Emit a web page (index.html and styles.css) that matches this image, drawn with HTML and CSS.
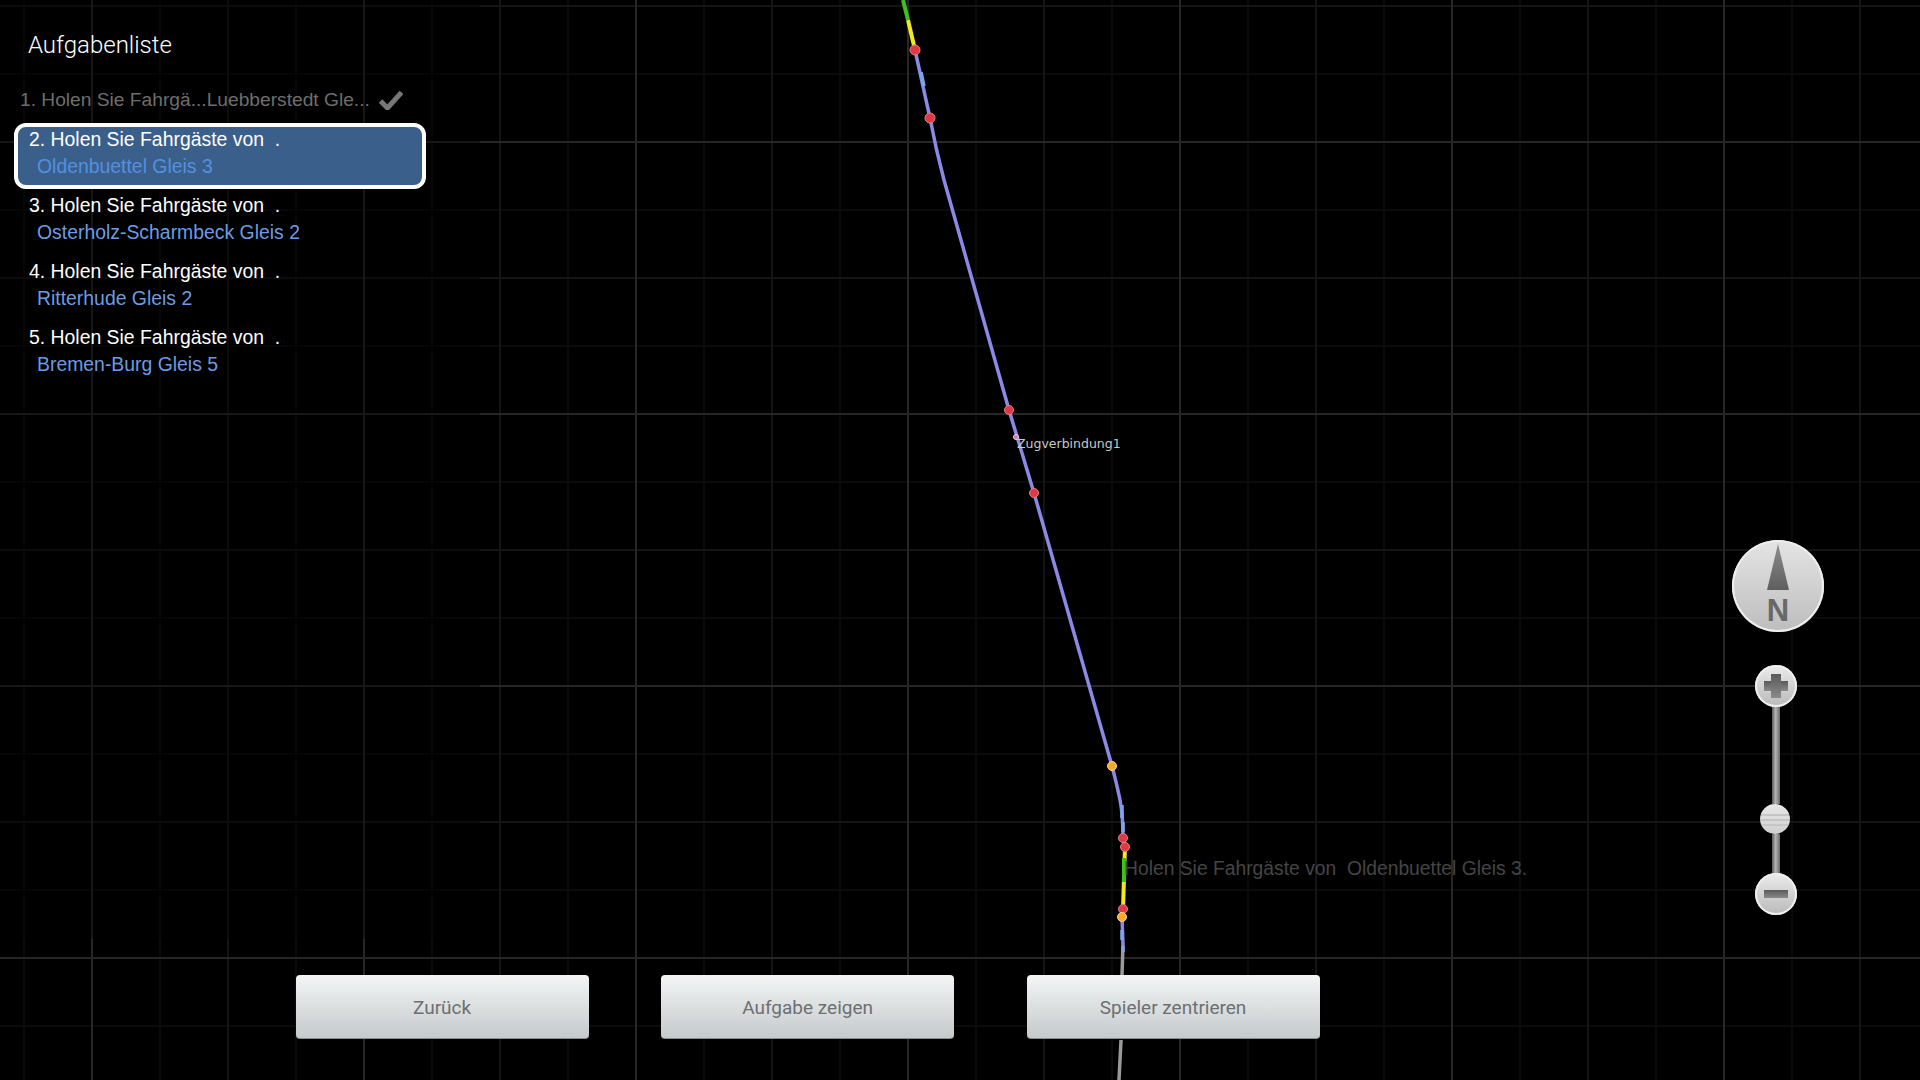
FILE: index.html
```html
<!DOCTYPE html>
<html lang="de">
<head>
  <meta charset="utf-8">
  <title>Aufgabenliste</title>
  <link rel="stylesheet" href="styles.css">
</head>
<body>
  <div class="screen">
    <div class="tile-dim"></div>

    <svg class="track" width="1920" height="1080" viewBox="0 0 1920 1080">
      <path class="rail grey" d="M1123 945 L1122 975 M1121 1040 Q1120 1060 1119 1080"/>
      <path class="rail blue" d="M915 50 L930 118 Q936 150 944 180 L1009 410 L1034 493 L1112 766 Q1117 785 1120 800 Q1123 815 1123 838 L1125 847"/>
      <path class="rail blue" d="M1122 917 L1123 945"/>
      <path class="rail yellow" d="M908 20 L915 50"/>
      <path class="rail green" d="M903 0 L908 20"/>
      <path class="rail yellow" d="M1125 847 L1123 909"/>
      <path class="rail green" d="M1124 858 L1124 882"/>
      <path class="stub" d="M1122 805 V818 M1123 822 V832 M921 72 L924 86 M1122 930 V940 M1123 946 V952"/>
      <circle class="dot red" cx="915" cy="50" r="5"/>
      <circle class="dot red" cx="930" cy="118" r="5"/>
      <circle class="dot red" cx="1009" cy="410" r="4.5"/>
      <circle class="dot pink" cx="1016" cy="437" r="2.5"/>
      <circle class="dot red" cx="1034" cy="493" r="4.5"/>
      <circle class="dot amber" cx="1112" cy="766" r="4.5"/>
      <circle class="dot red" cx="1123" cy="838" r="4.5"/>
      <circle class="dot red" cx="1125" cy="847" r="4.5"/>
      <circle class="dot red" cx="1123" cy="909" r="4.5"/>
      <circle class="dot amber" cx="1122" cy="917" r="4.5"/>
    </svg>

    <span class="train-label">Zugverbindung1</span>
    <span class="task-hint">Holen Sie Fahrgäste von&nbsp; Oldenbuettel Gleis 3.</span>

    <aside class="task-panel">
      <h1 class="task-title">Aufgabenliste</h1>
      <div class="task-done">
        <span>1. Holen Sie Fahrgä...Luebberstedt Gle...</span>
        <svg class="check" width="24" height="20" viewBox="0 0 24 20">
          <path d="M1.5 11 L8.5 18 L22.5 2.5" />
        </svg>
      </div>
      <div class="task active">
        <div class="task-line">2. Holen Sie Fahrgäste von&nbsp; .</div>
        <div class="task-place">Oldenbuettel Gleis 3</div>
      </div>
      <div class="task">
        <div class="task-line">3. Holen Sie Fahrgäste von&nbsp; .</div>
        <div class="task-place">Osterholz-Scharmbeck Gleis 2</div>
      </div>
      <div class="task">
        <div class="task-line">4. Holen Sie Fahrgäste von&nbsp; .</div>
        <div class="task-place">Ritterhude Gleis 2</div>
      </div>
      <div class="task">
        <div class="task-line">5. Holen Sie Fahrgäste von&nbsp; .</div>
        <div class="task-place">Bremen-Burg Gleis 5</div>
      </div>
    </aside>

    <div class="map-controls">
      <div class="compass">
        <svg width="92" height="92" viewBox="0 0 92 92">
          <defs>
            <linearGradient id="needle" x1="0" y1="0" x2="0" y2="1">
              <stop offset="0" stop-color="#8c8c8c"/>
              <stop offset="1" stop-color="#5e5e5e"/>
            </linearGradient>
          </defs>
          <path d="M46 4 L57 50 H35 Z" fill="url(#needle)"/>
          <text x="46" y="81" text-anchor="middle">N</text>
        </svg>
      </div>
      <div class="zoom-slider">
        <div class="knob plus"></div>
        <div class="rod rod-top"></div>
        <div class="thumb"></div>
        <div class="rod rod-bottom"></div>
        <div class="knob minus"></div>
      </div>
    </div>

    <div class="actions">
      <button class="action">Zurück</button>
      <button class="action">Aufgabe zeigen</button>
      <button class="action">Spieler zentrieren</button>
    </div>
  </div>
</body>
</html>
```

FILE: styles.css
```css
:root {
  --line-major: #272727;
  --line-mid: #141414;
  --line-minor: #0b0b0b;
  --text-blue: #6c9ce2;
}

html, body {
  margin: 0;
  background: #000;
}

.screen {
  width: 1920px;
  height: 1080px;
  position: relative;
  overflow: hidden;
  display: flex;
  flex-direction: column;
  font-family: 'Liberation Sans', Arial, sans-serif;
  color: #fff;
  background-color: #000;
  background-image:
    linear-gradient(to right, var(--line-major) 2px, transparent 2px),
    linear-gradient(to bottom, var(--line-major) 2px, transparent 2px),
    linear-gradient(to right, var(--line-mid) 2px, transparent 2px),
    linear-gradient(to bottom, var(--line-mid) 2px, transparent 2px),
    linear-gradient(to right, var(--line-minor) 2px, transparent 2px),
    linear-gradient(to bottom, var(--line-minor) 2px, transparent 2px);
  background-size:
    272px 100%, 100% 272px,
    136px 100%, 100% 136px,
    68px 100%, 100% 68px;
  background-position:
    91px 0, 0 141px,
    91px 0, 0 5px,
    23px 0, 0 73px;
}

/* the tile in the top left corner is drawn fainter */
.tile-dim {
  position: absolute;
  left: 0;
  top: 0;
  width: 480px;
  height: 939px;
  background: rgba(0, 0, 0, 0.4);
}

.track {
  position: absolute;
  left: 0;
  top: 0;
}

.rail {
  fill: none;
  stroke-width: 3.5;
}

.rail.blue { stroke: #8a8ae6; }
.rail.grey { stroke: #9a9a9a; }
.rail.yellow { stroke: #f2e81e; stroke-width: 4; }
.rail.green { stroke: #3fc01c; stroke-width: 4; }

.stub {
  fill: none;
  stroke: #7fa4ea;
  stroke-width: 3.5;
}

.dot {
  stroke-width: 1;
}

.dot.red { fill: #dd3a46; stroke: #e87e88; }
.dot.amber { fill: #f5a92e; stroke: #ffd890; }
.dot.pink { fill: #d078b0; stroke: #f0d0e8; }

.train-label {
  position: absolute;
  left: 1017px;
  top: 436px;
  font-family: 'DejaVu Sans', sans-serif;
  font-size: 12.5px;
  line-height: 16px;
  color: #c8c8c8;
}

.task-hint {
  position: absolute;
  left: 1124px;
  top: 858px;
  font-size: 19.3px;
  line-height: 22px;
  color: #454545;
}

.task-panel {
  position: relative;
  width: 412px;
  margin-left: 14px;
}

.task-title {
  margin: 0;
  height: 78px;
  padding: 32px 0 0 14px;
  box-sizing: border-box;
  font-family: Roboto, sans-serif;
  font-weight: 300;
  font-size: 24px;
  line-height: 27px;
}

.task-done {
  display: flex;
  align-items: center;
  gap: 9px;
  height: 45px;
  padding: 0 0 2px 6px;
  box-sizing: border-box;
  font-size: 19.2px;
  color: #6e6e6e;
}

.check {
  flex: none;
}

.check path {
  fill: none;
  stroke: #777;
  stroke-width: 5;
}

.task {
  height: 66px;
  box-sizing: border-box;
  border: 4px solid transparent;
  border-radius: 12px;
  padding-left: 11px;
  font-size: 19.4px;
}

.task.active {
  border-color: #fff;
  background: #3a5f8a;
}

.task-line {
  line-height: 25px;
}

.task-place {
  padding-left: 8px;
  line-height: 28px;
  color: var(--text-blue);
}

.active .task-place {
  color: #5390e2;
}

.map-controls {
  position: absolute;
  left: 1732px;
  top: 540px;
  width: 92px;
  display: flex;
  flex-direction: column;
  align-items: center;
}

.compass {
  width: 92px;
  height: 92px;
  border-radius: 50%;
  background: linear-gradient(to bottom, #e4e4e4, #bdbdbd);
  box-shadow: inset 0 0 0 2px #eee;
}

.compass text {
  font-family: 'Liberation Sans', Arial, sans-serif;
  font-weight: bold;
  font-size: 31px;
  fill: #686868;
}

.zoom-slider {
  margin-top: 33px;
  display: flex;
  flex-direction: column;
  align-items: center;
  transform: translateX(-2px);
}

.knob {
  position: relative;
  z-index: 1;
  width: 42px;
  height: 42px;
  border-radius: 50%;
  flex: none;
  background: linear-gradient(to bottom, #ececec, #b9b9b9);
  box-shadow: inset 0 0 0 2px #eee;
}

.knob::before,
.plus::after {
  content: '';
  position: absolute;
  background: linear-gradient(to bottom, #5a5a5a, #8a8a8a);
}

.knob::before {
  left: 9px;
  top: 17px;
  width: 24px;
  height: 8px;
}

.plus::before {
  top: 16px;
  height: 10px;
}

.plus::after {
  left: 16px;
  top: 9px;
  width: 10px;
  height: 24px;
}

.rod {
  width: 8px;
  background: linear-gradient(to right, #5a5a5a, #b4b4b4 45%, #6a6a6a);
}

.rod-top {
  height: 99px;
  margin-top: -2px;
}

.rod-bottom {
  height: 41px;
  margin-bottom: -2px;
}

.thumb {
  position: relative;
  left: -1px;
  z-index: 1;
  width: 30px;
  height: 30px;
  border-radius: 50%;
  background:
    repeating-linear-gradient(to bottom, transparent 0, transparent 3px, #c6c6c6 3px, #c6c6c6 5px) center / 100% 16px no-repeat,
    linear-gradient(to bottom, #e8e8e8, #cfcfcf);
}

.actions {
  position: relative;
  margin-top: auto;
  display: flex;
  gap: 72.5px;
  padding: 0 0 41px 295.6px;
}

.action {
  width: 293px;
  height: 64px;
  padding: 2px 0 0;
  border: none;
  border-bottom: 1px solid #8a8f91;
  border-radius: 4px;
  background: linear-gradient(to bottom, #f3f5f5, #c5cacc);
  font-family: Roboto, sans-serif;
  font-size: 19px;
  color: #6c7072;
}
```
